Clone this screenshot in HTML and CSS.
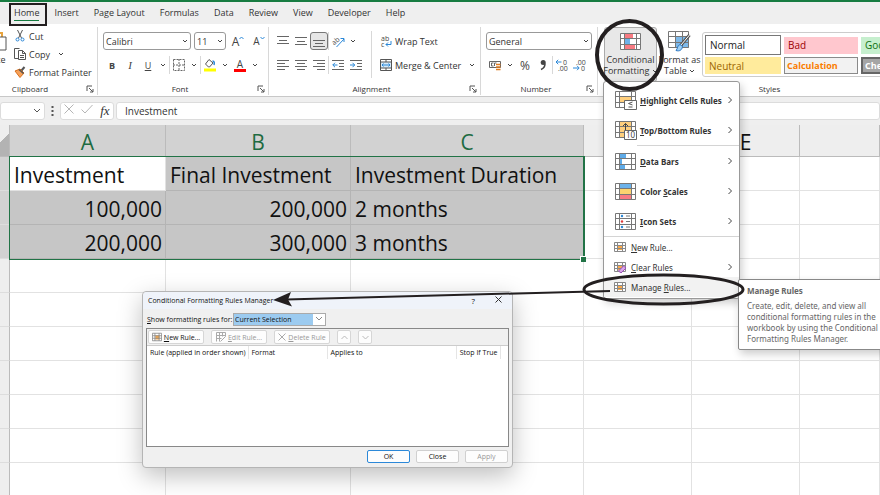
FILE: index.html
```html
<!DOCTYPE html>
<html lang="en">
<head>
  <meta charset="UTF-8">
  <meta name="viewport" content="width=device-width, initial-scale=1.0">
  <title>Manage Rules</title>
  <link rel="stylesheet" href="styles.css">
</head>
<body>
  <!-- Shared shapes -->
  <svg class="defs" width="0" height="0" aria-hidden="true">
    <symbol id="caret" viewBox="0 0 6 6"><path d="M1 2l2 2 2-2" fill="none" stroke="#444"/></symbol>
    <symbol id="arrow" viewBox="0 0 6 10"><path d="M1.500 2l3 3-3 3" fill="none" stroke="#444"/></symbol>
    <symbol id="launcher" viewBox="0 0 8 8"><path d="M1 6V1h5M3 3l4 4M7 4v3H4" fill="none" stroke="#555"/></symbol>
    <symbol id="gridlines" viewBox="0 0 21 17"><path d="M.5.5h20v16H.5zM.5 5.500h20M.5 11.500h20M4.500.5v16M16.500.5v16" fill="none" stroke="#777"/></symbol>
    <symbol id="rule" viewBox="0 0 12 12"><path d="M.5 1.500h11v9H.5z" fill="#fff"/><path d="M4 4h5v5H4z" fill="#f9a94b"/><path d="M.5 1.500h11v9H.5zM.5 4.500h11M.5 7.500h11M3.500 1.500v9M8.500 1.500v9" fill="none" stroke="#888"/></symbol>
  </svg>

  <nav class="tabs">
    <button class="tab active">Home</button>
    <button class="tab">Insert</button>
    <button class="tab">Page Layout</button>
    <button class="tab">Formulas</button>
    <button class="tab">Data</button>
    <button class="tab">Review</button>
    <button class="tab">View</button>
    <button class="tab">Developer</button>
    <button class="tab">Help</button>
  </nav>

  <div class="ribbon">
    <!-- Clipboard -->
    <section class="group clipboard">
      <div class="group-body">
        <button class="paste">
          <svg width="26" height="22" viewBox="0 0 26 22"><path d="M3 3h18v15H3z" fill="#fff" stroke="#e8a33d" stroke-width="2"/><path d="M13 7h12v13H13z" fill="#fff" stroke="#555"/></svg>
          Paste
        </button>
        <div class="stack">
          <button class="line-btn">
            <svg width="12" height="12" viewBox="0 0 12 12"><path d="M3.500 0l4 8M8.500 0l-4 8" stroke="#555" fill="none"/><circle cx="3.500" cy="9.500" r="1.500" fill="none" stroke="#2b88d8"/><circle cx="8.500" cy="9.500" r="1.500" fill="none" stroke="#2b88d8"/></svg>
            Cut
          </button>
          <button class="line-btn">
            <svg width="12" height="12" viewBox="0 0 12 12"><path d="M4.500 10.500H.5V.5h5" fill="none" stroke="#555"/><path d="M4.500 2.500h4l3 3v6h-7zM8.500 2.500v3h3M6 7.500h4M6 9.500h4" fill="#fff" stroke="#555"/></svg>
            Copy
            <svg class="gap-caret" width="6" height="6"><use href="#caret"/></svg>
          </button>
          <button class="line-btn">
            <svg width="12" height="12" viewBox="0 0 12 12"><path d="M7.500 4.500L10.500 1" stroke="#555" stroke-width="2"/><path d="M1 5l5-2 4 4-4 4.500z" fill="#f6a15a" stroke="#d86e1a"/><path d="M5 3.500l4.500 4" stroke="#555" stroke-width="1.500"/></svg>
            Format Painter
          </button>
        </div>
      </div>
      <div class="group-foot"><span>Clipboard</span><svg width="8" height="8"><use href="#launcher"/></svg></div>
    </section>

    <!-- Font -->
    <section class="group font">
      <div class="group-body rows">
        <div class="row fields">
          <select class="field font-name" aria-label="Font"><option>Calibri</option></select>
          <select class="field font-size" aria-label="Font size"><option>11</option></select>
          <button class="tool grow">A<svg width="5" height="4" viewBox="0 0 5 4"><path d="M.5 3l2-2 2 2" fill="none" stroke="#2b88d8"/></svg></button>
          <button class="tool shrink">A<svg width="5" height="4" viewBox="0 0 5 4"><path d="M.5 1l2 2 2-2" fill="none" stroke="#2b88d8"/></svg></button>
        </div>
        <div class="row">
          <button class="tool"><b>B</b></button>
          <button class="tool italic">I</button>
          <button class="tool"><u>U</u></button>
          <button class="drop" aria-label="Underline style"><svg width="6" height="6"><use href="#caret"/></svg></button>
          <span class="sep"></span>
          <button class="tool" aria-label="Borders"><svg width="12" height="12" viewBox="0 0 12 12"><path d="M.5.5h11v11H.5zM6 0v12M0 6h12" fill="none" stroke="#666" stroke-dasharray="2 1"/></svg></button>
          <button class="drop" aria-label="Border style"><svg width="6" height="6"><use href="#caret"/></svg></button>
          <span class="sep"></span>
          <button class="tool" aria-label="Fill color"><svg width="12" height="14" viewBox="0 0 12 14"><path d="M5 1.500L1.500 6l3 3h1l3.500-4z" fill="#fff" stroke="#555"/><path d="M8.500 3c2 0 2 2 1.500 4" fill="none" stroke="#2b88d8" stroke-width="1.500"/><path d="M0 10.500h12v3H0z" fill="#ff0"/></svg></button>
          <button class="drop" aria-label="Fill colors"><svg width="6" height="6"><use href="#caret"/></svg></button>
          <button class="tool font-color">A</button>
          <button class="drop" aria-label="Font colors"><svg width="6" height="6"><use href="#caret"/></svg></button>
        </div>
      </div>
      <div class="group-foot"><span>Font</span><svg width="8" height="8"><use href="#launcher"/></svg></div>
    </section>

    <!-- Alignment -->
    <section class="group align">
      <div class="group-body">
        <div class="rows">
          <div class="row">
            <button class="tool" aria-label="Top align"><svg width="12" height="12" viewBox="0 0 12 12"><path d="M0 1.500h12M2 5.500h8M0 8.500h12" stroke="#666"/></svg></button>
            <button class="tool" aria-label="Middle align"><svg width="12" height="12" viewBox="0 0 12 12"><path d="M0 2.500h12M2 6.500h8M0 9.500h12" stroke="#666"/></svg></button>
            <button class="tool pressed" aria-label="Bottom align"><svg width="12" height="12" viewBox="0 0 12 12"><path d="M0 5.500h12M2 8.500h8M0 11.500h12" stroke="#666"/></svg></button>
            <span class="sep"></span>
            <button class="tool" aria-label="Orientation"><svg width="14" height="14" viewBox="0 0 14 14"><text x="1" y="10" font-size="7" fill="#444" transform="rotate(-40 4 8)">ab</text><path d="M5.500 13L13 5M9.500 4.500H13V8" fill="none" stroke="#2b88d8"/></svg></button>
            <button class="drop" aria-label="Orientations"><svg width="6" height="6"><use href="#caret"/></svg></button>
          </div>
          <div class="row">
            <button class="tool" aria-label="Align left"><svg width="12" height="12" viewBox="0 0 12 12"><path d="M0 1.500h12M0 4.500h8M0 7.500h12M0 10.500h8" stroke="#666"/></svg></button>
            <button class="tool" aria-label="Center"><svg width="12" height="12" viewBox="0 0 12 12"><path d="M0 1.500h12M2 4.500h8M0 7.500h12M2 10.500h8" stroke="#666"/></svg></button>
            <button class="tool" aria-label="Align right"><svg width="12" height="12" viewBox="0 0 12 12"><path d="M0 1.500h12M4 4.500h8M0 7.500h12M4 10.500h8" stroke="#666"/></svg></button>
            <span class="sep"></span>
            <button class="tool" aria-label="Decrease indent"><svg width="12" height="12" viewBox="0 0 12 12"><path d="M0 1.500h12M7 4.500h5M7 7.500h5M0 10.500h12" stroke="#666"/><path d="M5.500 6H.8M3 3.800L.8 6 3 8.200" fill="none" stroke="#2b88d8"/></svg></button>
            <button class="tool" aria-label="Increase indent"><svg width="12" height="12" viewBox="0 0 12 12"><path d="M0 1.500h12M7 4.500h5M7 7.500h5M0 10.500h12" stroke="#666"/><path d="M0 6h4.700M2.500 3.800L4.700 6 2.500 8.200" fill="none" stroke="#2b88d8"/></svg></button>
          </div>
        </div>
        <div class="rows split">
          <button class="line-btn">
            <svg width="12" height="14" viewBox="0 0 12 14"><text x="1" y="7" font-size="7" fill="#444">ab</text><text x="1" y="13" font-size="7" fill="#444">c</text><path d="M11 7v3.500H6M8 8.500l-2 2 2 2" fill="none" stroke="#2b88d8"/></svg>
            Wrap Text
          </button>
          <button class="line-btn">
            <svg width="12" height="12" viewBox="0 0 12 12"><path d="M.5 3h11v6H.5z" fill="#d6eafa"/><path d="M.5.5h11v11H.5zM.5 3h11M.5 9h11M6 .5V3M6 9v2.500" fill="none" stroke="#555"/><path d="M2 6h8M3.500 4.500L2 6l1.500 1.500M8.500 4.500L10 6 8.500 7.500" fill="none" stroke="#2b88d8"/></svg>
            Merge &amp; Center
            <svg class="gap-caret" width="6" height="6"><use href="#caret"/></svg>
          </button>
        </div>
      </div>
      <div class="group-foot"><span>Alignment</span><svg width="8" height="8"><use href="#launcher"/></svg></div>
    </section>

    <!-- Number -->
    <section class="group number">
      <div class="group-body rows">
        <div class="row fields">
          <select class="field format" aria-label="Number format"><option>General</option></select>
        </div>
        <div class="row">
          <button class="tool" aria-label="Accounting format"><svg width="13" height="12" viewBox="0 0 13 12"><path d="M.5 2.500h11v6H.5z" fill="#fff" stroke="#666"/><path d="M4.500 4h-2v3h2M7.500 4h-2v3" fill="none" stroke="#666"/><path d="M7 5.500h4.500M7 8h4.500M7 10.500h4.500" stroke="#e07b1f" stroke-width="1.500"/></svg></button>
          <button class="drop" aria-label="Currencies"><svg width="6" height="6"><use href="#caret"/></svg></button>
          <button class="tool percent">%</button>
          <button class="tool" aria-label="Comma style"><svg width="8" height="12" viewBox="0 0 8 12"><path d="M2 10.500c2.500-1 4-3 4-6" fill="none" stroke="#444" stroke-width="1.500"/><circle cx="4.200" cy="3.500" r="2.500" fill="#444"/></svg></button>
          <span class="sep"></span>
          <button class="tool" aria-label="Increase decimal"><svg width="14" height="14" viewBox="0 0 14 14"><path d="M1 4h5.500M3.200 1.800L1 4l2.200 2.200" fill="none" stroke="#2b88d8"/><text x="8" y="7" font-size="7" fill="#444">0</text><text x="3" y="13" font-size="7" fill="#444">.00</text></svg></button>
          <button class="tool" aria-label="Decrease decimal"><svg width="14" height="14" viewBox="0 0 14 14"><text x="3" y="7" font-size="7" fill="#444">.00</text><path d="M0 10h6M4 7.800L6.200 10 4 12.200" fill="none" stroke="#2b88d8"/><text x="8" y="13" font-size="7" fill="#444">0</text></svg></button>
        </div>
      </div>
      <div class="group-foot"><span>Number</span><svg width="8" height="8"><use href="#launcher"/></svg></div>
    </section>

    <!-- Styles -->
    <section class="group styles">
      <div class="group-body">
        <button class="big-btn open">
          <svg width="21" height="17" viewBox="0 0 21 17"><path d="M.5.5h20v16H.5z" fill="#fff"/><path d="M4 0h9v6H4zM4 11h11v6H4z" fill="#f77b83"/><path d="M4 6h6v5H4z" fill="#6cb2ea"/><use href="#gridlines" width="21" height="17"/></svg>
          <span>Conditional</span>
          <span>Formatting <svg width="6" height="6"><use href="#caret"/></svg></span>
        </button>
        <button class="big-btn narrow">
          <svg width="23" height="21" viewBox="0 0 23 21"><path d="M.5.5h20v16H.5z" fill="#fff"/><path d="M7 6h14v11H7z" fill="#7db9ea"/><path d="M.5.5h20v16H.5zM.5 5.500h20M.5 11.500h20M7.500.5v16M14.500.5v16" fill="none" stroke="#777"/><path d="M21.500 4L13 14" stroke="#555" stroke-width="3"/><path d="M21.500 4L13 14" stroke="#fff"/><path d="M8 19.500c3 1 6 0 6.500-4l-2.500-2c-3 1-2 4-4 6z" fill="#9fd0f5" stroke="#2b78c4"/></svg>
          <span>Format as</span>
          <span>Table <svg width="6" height="6"><use href="#caret"/></svg></span>
        </button>
        <div class="gallery">
          <button class="style normal">Normal</button>
          <button class="style bad">Bad</button>
          <button class="style good">Good</button>
          <button class="style neutral">Neutral</button>
          <button class="style calc">Calculation</button>
          <button class="style check">Check Cell</button>
        </div>
      </div>
      <div class="group-foot"><span>Styles</span></div>
    </section>
  </div>

  <div class="formula-bar">
    <div class="name-box"><svg width="8" height="6" viewBox="0 0 8 6"><path d="M1 1l3 3 3-3" fill="none" stroke="#555"/></svg></div>
    <svg width="3" height="10" viewBox="0 0 3 10"><path d="M.5 1h2M.5 5h2M.5 9h2" stroke="#555" stroke-width="2"/></svg>
    <div class="entry">
      <button aria-label="Cancel"><svg width="10" height="10" viewBox="0 0 10 10"><path d="M.5.5l9 9M9.500.5l-9 9" stroke="#b5b5b5"/></svg></button>
      <button aria-label="Enter"><svg width="12" height="10" viewBox="0 0 12 10"><path d="M.5 5.500l3.500 3.500 7.500-8" fill="none" stroke="#b5b5b5"/></svg></button>
      <button class="fx">fx</button>
    </div>
    <input class="formula" aria-label="Formula" value="Investment">
  </div>

  <main class="sheet">
    <table>
      <colgroup>
        <col class="col-head"><col class="col-a"><col class="col-b"><col class="col-c"><col class="col-d"><col class="col-d"><col>
      </colgroup>
      <thead>
        <tr>
          <th class="corner"></th>
          <th class="on">A</th><th class="on">B</th><th class="on">C</th><th></th><th>E</th><th></th>
        </tr>
      </thead>
      <tbody>
        <tr><th class="on"></th><td class="current">Investment</td><td class="in">Final Investment</td><td class="in">Investment Duration</td><td></td><td></td><td></td></tr>
        <tr><th class="on"></th><td class="in num">100,000</td><td class="in num">200,000</td><td class="in">2 months</td><td></td><td></td><td></td></tr>
        <tr><th class="on"></th><td class="in num">200,000</td><td class="in num">300,000</td><td class="in">3 months</td><td></td><td></td><td></td></tr>
        <tr><th></th><td></td><td></td><td></td><td></td><td></td><td></td></tr>
        <tr><th></th><td></td><td></td><td></td><td></td><td></td><td></td></tr>
        <tr><th></th><td></td><td></td><td></td><td></td><td></td><td></td></tr>
        <tr><th></th><td></td><td></td><td></td><td></td><td></td><td></td></tr>
        <tr><th></th><td></td><td></td><td></td><td></td><td></td><td></td></tr>
        <tr><th></th><td></td><td></td><td></td><td></td><td></td><td></td></tr>
        <tr><th></th><td></td><td></td><td></td><td></td><td></td><td></td></tr>
      </tbody>
    </table>
    <div class="selection"></div>
  </main>

  <!-- Rules manager dialog -->
  <div class="dialog" role="dialog" aria-labelledby="dialogTitle">
    <header class="dialog-title">
      <span id="dialogTitle">Conditional Formatting Rules Manager</span>
      <button class="help">?</button>
      <button aria-label="Close window"><svg width="7" height="7" viewBox="0 0 7 7"><path d="M.5.5l6 6M6.500.5l-6 6" stroke="#333"/></svg></button>
    </header>
    <div class="scope">
      <label for="scope"><u>S</u>how formatting rules for:</label>
      <select id="scope"><option>Current Selection</option></select>
    </div>
    <div class="rules">
      <div class="rules-bar">
        <button class="rule-btn"><svg width="10" height="10"><use href="#rule"/></svg><span><u>N</u>ew Rule...</span></button>
        <button class="rule-btn" disabled><svg width="10" height="10" viewBox="0 0 10 10"><path d="M.5 9.500v-9h9v4M.5 3.500h9M.5 6.500h5M3.500.5v9M6.500.5v4M4.500 9.500l5-5" fill="none" stroke="#aaa"/></svg><span><u>E</u>dit Rule...</span></button>
        <button class="rule-btn" disabled><svg width="8" height="8" viewBox="0 0 8 8"><path d="M.5.5l7 7M7.500.5l-7 7" stroke="#aaa"/></svg><span><u>D</u>elete Rule</span></button>
        <button class="rule-btn move" disabled aria-label="Move up"><svg width="7" height="5" viewBox="0 0 7 5"><path d="M.5 4l3-3 3 3" fill="none" stroke="#bbb"/></svg></button>
        <button class="rule-btn move" disabled aria-label="Move down"><svg width="7" height="5" viewBox="0 0 7 5"><path d="M.5 1l3 3 3-3" fill="none" stroke="#bbb"/></svg></button>
      </div>
      <table class="rule-list">
        <thead>
          <tr><th class="c-rule">Rule (applied in order shown)</th><th class="c-format">Format</th><th>Applies to</th><th class="c-stop">Stop If True</th></tr>
        </thead>
      </table>
    </div>
    <footer class="dialog-foot">
      <button class="default">OK</button>
      <button>Close</button>
      <button disabled>Apply</button>
    </footer>
  </div>

  <!-- Conditional Formatting menu -->
  <div class="menu">
    <button class="item">
      <svg width="22" height="19" viewBox="0 0 22 19"><path d="M5 5h11v6H5z" fill="#ffcf7d"/><use href="#gridlines" width="21" height="17"/><path d="M9.500 9.500h12v9h-12z" fill="#fff" stroke="#666"/><path d="M17.500 11l-4 1.500 4 1.500M13.500 16h4" fill="none" stroke="#555"/></svg>
      <span><u>H</u>ighlight Cells Rules</span><svg width="6" height="10"><use href="#arrow"/></svg>
    </button>
    <button class="item">
      <svg width="22" height="19" viewBox="0 0 22 19"><path d="M5 0h11v16H5z" fill="#ffcf7d"/><use href="#gridlines" width="21" height="17"/><path d="M10.500 9V2.500M8 5l2.500-2.500L13 5" fill="none" stroke="#444"/><path d="M9.500 9.500h12v9h-12z" fill="#fff" stroke="#666"/><text x="11" y="17" font-size="8" font-weight="400" fill="#444">10</text></svg>
      <span><u>T</u>op/Bottom Rules</span><svg width="6" height="10"><use href="#arrow"/></svg>
    </button>
    <hr class="short">
    <button class="item">
      <svg width="22" height="17" viewBox="0 0 22 17"><path d="M4 0h7v6H4zM4 6h3v5H4zM4 11h6v5H4z" fill="#5fabe8"/><use href="#gridlines" width="21" height="17"/></svg>
      <span><u>D</u>ata Bars</span><svg width="6" height="10"><use href="#arrow"/></svg>
    </button>
    <button class="item">
      <svg width="22" height="17" viewBox="0 0 22 17"><path d="M4 0h12v6H4z" fill="#6cb2ea"/><path d="M4 6h12v5H4z" fill="#fbd36f"/><path d="M4 11h12v5H4z" fill="#f77b83"/><use href="#gridlines" width="21" height="17"/></svg>
      <span>Color <u>S</u>cales</span><svg width="6" height="10"><use href="#arrow"/></svg>
    </button>
    <button class="item">
      <svg width="22" height="17" viewBox="0 0 22 17"><path d="M.5.5h20v16H.5zM.5 5.500h20M.5 11.500h20M4.500.5v16M16.500.5v16" fill="none" stroke="#777"/><circle cx="7" cy="3" r="1.200" fill="#2b88d8"/><circle cx="7" cy="8.500" r="1.200" fill="#e23b3b"/><circle cx="7" cy="14" r="1.200" fill="#2b88d8"/><path d="M11 3h4M11 8.500h4M11 14h4" stroke="#777"/></svg>
      <span><u>I</u>con Sets</span><svg width="6" height="10"><use href="#arrow"/></svg>
    </button>
    <hr>
    <button class="item small">
      <svg width="12" height="12"><use href="#rule"/></svg><span><u>N</u>ew Rule...</span>
    </button>
    <button class="item small">
      <svg width="12" height="12" viewBox="0 0 12 12"><use href="#rule" width="12" height="12"/><path d="M4.500 10l5-5 2.500 2-5 5z" fill="#d9a6ea" stroke="#9a4fb5"/></svg><span><u>C</u>lear Rules</span><svg width="6" height="10"><use href="#arrow"/></svg>
    </button>
    <button class="item small hover">
      <svg width="12" height="12"><use href="#rule"/></svg><span>Manage <u>R</u>ules...</span>
    </button>
  </div>

  <div class="tip" role="tooltip">
    <strong>Manage Rules</strong>
    <p>Create, edit, delete, and view all conditional formatting rules in the workbook by using the Conditional Formatting Rules Manager.</p>
  </div>

  <!-- Callouts -->
  <svg class="callouts" width="880" height="495" viewBox="0 0 880 495" fill="none" stroke="#231f20" aria-hidden="true">
    <rect x="10" y="4" width="36" height="21" stroke-width="2"/>
    <ellipse cx="629.500" cy="55" rx="32.500" ry="34" stroke-width="4"/>
    <ellipse cx="663.500" cy="289.500" rx="79.500" ry="14.500" stroke-width="3"/>
    <path d="M610 291L286 299.500" stroke-width="2"/>
    <path d="M273 300l18-8-3 7.500 4 7z" fill="#231f20" stroke="none"/>
  </svg>
</body>
</html>
```

FILE: styles.css
```css
* {
  box-sizing: border-box;
}
body {
  margin: 0;
  height: 100vh;
  overflow: hidden;
  position: relative;
  font-family: "Open Sans", "Noto Sans", sans-serif;
  font-size: 9px;
  color: #333;
  background: #fff;
}
button, select, input {
  font: inherit;
  color: inherit;
  margin: 0;
}
button {
  padding: 0;
  border: none;
  background: none;
  white-space: nowrap;
}
svg {
  flex: none;
}
.defs {
  position: absolute;
}

/* Tabs */
.tabs {
  display: flex;
  gap: 15px;
  height: 24px;
  padding: 0 14px;
  border-top: 2px solid #177c41;
  background: #efefef;
}
.tab {
  height: 19px;
  padding-top: 2px;
  border-bottom: 1px solid transparent;
}
.tab.active {
  border-color: #177c41;
}

/* Ribbon */
.ribbon {
  display: flex;
  height: 73px;
  overflow: hidden;
  background: #fff;
  border-bottom: 1px solid #c8c8c8;
}
.group {
  flex: none;
  display: flex;
  flex-direction: column;
  margin-top: 3px;
  margin-bottom: 1px;
  border-right: 1px solid #d8d8d8;
}
.group-body {
  flex: 1;
  display: flex;
}
.group-foot {
  display: flex;
  align-items: center;
  height: 13px;
  padding-right: 3px;
  font-size: 8px;
}
.group-foot span {
  flex: 1;
  text-align: center;
}
.rows {
  display: flex;
  flex-direction: column;
  gap: 6px;
  padding-top: 5px;
}
.row {
  display: flex;
  align-items: center;
  height: 18px;
}
.fields {
  gap: 3px;
}
.clipboard {
  width: 124px;
  margin-left: -26px;
}
.paste {
  width: 40px;
  display: flex;
  flex-direction: column;
  align-items: center;
  gap: 1px;
  padding-top: 3px;
}
.stack {
  display: flex;
  flex-direction: column;
}
.line-btn {
  display: flex;
  align-items: center;
  gap: 3px;
  height: 18px;
}
.gap-caret {
  margin-left: 5px;
}
.font {
  width: 171px;
  padding-left: 5px;
}
.align {
  width: 212px;
  padding-left: 5px;
}
.number {
  width: 117px;
  padding-left: 5px;
}
.field {
  height: 18px;
  padding: 0 2px;
  border: 1px solid #999;
  border-radius: 3px;
  appearance: none;
  background: #fff url("data:image/svg+xml,%3Csvg xmlns='http://www.w3.org/2000/svg' width='6' height='6'%3E%3Cpath d='M1 2l2 2 2-2' fill='none' stroke='%23444'/%3E%3C/svg%3E") no-repeat right 2px center;
}
.font-name {
  width: 88px;
}
.font-size {
  width: 32px;
}
.format {
  width: 106px;
}
.tool {
  width: 18px;
  height: 18px;
  display: flex;
  align-items: center;
  justify-content: center;
  color: #444;
}
.tool.pressed {
  border: 1px solid #777;
  border-radius: 3px;
  background: #e6e6e6;
}
.italic {
  font: italic 11px "Liberation Serif", serif;
}
.grow {
  font-size: 12px;
}
.shrink {
  font-size: 10px;
}
.grow svg, .shrink svg {
  align-self: flex-start;
  margin-top: 4px;
}
.percent {
  font-size: 12px;
}
.font-color {
  height: 14px;
  width: 12px;
  margin: 0 3px;
  border-bottom: 3px solid #f00;
  font-size: 10px;
}
.drop {
  width: 12px;
  height: 18px;
  display: flex;
  align-items: center;
  justify-content: center;
}
.sep {
  width: 1px;
  height: 18px;
  background: #d8d8d8;
}
.split {
  margin: 4px 0 4px 6px;
  padding: 1px 0 0 8px;
  border-left: 1px solid #d8d8d8;
}
.styles {
  border-right: none;
  padding-left: 6px;
}
.big-btn {
  width: 53px;
  display: flex;
  flex-direction: column;
  align-items: center;
  padding-top: 4px;
  line-height: 11px;
}
.big-btn > svg {
  height: 21px;
  margin-bottom: 2px;
}
.big-btn.open {
  padding-top: 3px;
  border: 1px solid #aaa;
  border-radius: 3px;
  background: #e8e8e8;
}
.big-btn.narrow {
  width: 45px;
}
.gallery {
  display: grid;
  grid-template-columns: 76px 74px 74px;
  gap: 2px 3px;
  align-self: flex-start;
  margin-top: 5px;
  padding: 2px;
  border: 1px solid #ccc;
  border-radius: 3px;
  background: #fff;
}
.style {
  height: 17px;
  align-self: center;
  padding-left: 4px;
  text-align: left;
  font-size: 10px;
}
.normal {
  height: 20px;
  border: 1px solid #777;
  color: #222;
}
.bad {
  background: #ffc7ce;
  color: #9c0006;
}
.good {
  background: #c6efce;
  color: #107010;
}
.neutral {
  background: #ffeb9c;
  color: #9c6500;
}
.calc {
  padding-left: 2px;
  border: 1px solid #8a8a8a;
  background: #f2f2f2;
  color: #fa7d00;
  font-size: 9px;
  font-weight: bold;
}
.check {
  padding-left: 2px;
  border: 2px solid #666;
  background: #a5a5a5;
  color: #fff;
  font-size: 9px;
  font-weight: bold;
}

/* Formula bar */
.formula-bar {
  display: flex;
  align-items: center;
  gap: 2px;
  height: 28px;
  padding-bottom: 1px;
  background: #efefef;
}
.formula-bar > svg {
  margin: 0 4px;
}
.name-box, .entry, .formula {
  height: 18px;
  border: 1px solid #dcdcdc;
  border-radius: 3px;
  background: #fff;
}
.name-box {
  width: 45px;
  display: flex;
  align-items: center;
  justify-content: flex-end;
  padding-right: 3px;
}
.entry {
  width: 54px;
  display: flex;
  align-items: center;
  justify-content: space-around;
}
.fx {
  font: italic 13px "Liberation Serif", serif;
}
.formula {
  flex: 1;
  min-width: 0;
  padding: 0 8px;
  font-size: 10px;
}

/* Sheet */
.sheet {
  position: relative;
  font-size: 21px;
  color: #111;
}
.sheet table {
  width: 100%;
  table-layout: fixed;
  border-collapse: separate;
  border-spacing: 0;
}
.col-head {
  width: 10px;
}
.col-a {
  width: 156px;
}
.col-b {
  width: 185px;
}
.col-c {
  width: 233px;
}
.col-d {
  width: 108px;
}
.sheet th {
  padding: 2px 0 0;
  font-weight: normal;
  background: #eee;
  border-right: 1px solid #bbb;
  border-bottom: 1px solid #ddd;
}
.sheet thead th {
  height: 32px;
  border-bottom-color: #bbb;
}
.sheet th.on {
  background: #d2d2d2;
  color: #1e6b41;
}
.sheet th.corner {
  background: linear-gradient(135deg, #eee 45%, #b3b3b3 45%);
}
.sheet td {
  height: 34px;
  padding: 2px 3px 0 4px;
  white-space: nowrap;
  border-right: 1px solid #e2e2e2;
  border-bottom: 1px solid #e2e2e2;
}
.sheet td.in {
  background: #c6c6c6;
  border-color: #b4b4b4;
}
.sheet .num {
  text-align: right;
}
.selection {
  position: absolute;
  left: 9px;
  top: 31px;
  width: 576px;
  height: 104px;
  border: 1px solid #217346;
  border-right-width: 2px;
}
.selection::after {
  content: "";
  position: absolute;
  right: -3px;
  bottom: -3px;
  width: 5px;
  height: 5px;
  border: 1px solid #fff;
  border-width: 1px 0 0 1px;
  background: #217346;
}

/* Dialog */
.dialog {
  position: absolute;
  left: 142px;
  top: 291px;
  width: 371px;
  height: 177px;
  display: flex;
  flex-direction: column;
  border: 1px solid #b5b5b5;
  border-radius: 4px;
  background: #f0f0f0;
  box-shadow: 0 8px 24px rgba(0, 0, 0, 0.25);
  font-size: 7px;
  color: #111;
}
.dialog-title {
  display: flex;
  align-items: center;
  gap: 20px;
  height: 17px;
  padding: 0 10px 0 5px;
  border-radius: 4px 4px 0 0;
  background: #eff3fa;
}
.dialog-title span {
  flex: 1;
}
.help {
  font-size: 8px;
}
.scope {
  display: flex;
  align-items: center;
  gap: 6px;
  height: 19px;
  padding: 2px 4px 0;
}
.scope label {
  width: 80px;
  white-space: nowrap;
}
.scope select {
  width: 93px;
  height: 13px;
  padding: 0 1px;
  border: 1px solid #aaa;
  appearance: none;
  background: url("data:image/svg+xml,%3Csvg xmlns='http://www.w3.org/2000/svg' width='12' height='13'%3E%3Cpath d='M0 0h12v13H0z' fill='%23fff'/%3E%3Cpath d='M3 4l3 3 3-3' fill='none' stroke='%23888'/%3E%3C/svg%3E") no-repeat right center #9ccbf0;
}
.rules {
  flex: 1;
  margin: 0 3px;
  border: 1px solid #888;
  background: #fff;
}
.rules-bar {
  display: flex;
  gap: 7px;
  padding: 1px;
  background: #f0f0f0;
  border-bottom: 1px solid #ccc;
}
.rule-btn {
  width: 56px;
  height: 14px;
  display: flex;
  align-items: center;
  justify-content: center;
  gap: 2px;
  border: 1px solid #d6d6d6;
  border-radius: 2px;
  background: #fdfdfd;
}
.rule-btn.move {
  width: 14px;
}
button:disabled {
  color: #999;
}
.rule-list {
  width: 98%;
  table-layout: fixed;
  border-collapse: collapse;
}
.rule-list th {
  height: 13px;
  padding: 0 3px;
  border-right: 1px solid #e5e5e5;
  font-weight: normal;
  text-align: left;
  white-space: nowrap;
}
.c-rule {
  width: 101px;
}
.c-format {
  width: 79px;
}
.c-stop {
  width: 44px;
}
.dialog-foot {
  display: flex;
  justify-content: flex-end;
  gap: 6px;
  padding: 3px 4px 4px;
}
.dialog-foot button {
  width: 43px;
  height: 13px;
  border: 1px solid #d0d0d0;
  border-radius: 2px;
  background: #fdfdfd;
}
.dialog-foot .default {
  border-color: #2b88d8;
}

/* Menu */
.menu {
  position: absolute;
  left: 603px;
  top: 81px;
  width: 137px;
  display: flex;
  flex-direction: column;
  padding: 3px 0 1px;
  border: 1px solid #999;
  border-radius: 3px;
  background: #fff;
  box-shadow: 2px 4px 8px rgba(0, 0, 0, 0.2);
  font-family: "Noto Sans", "Open Sans", sans-serif;
}
.item {
  display: flex;
  align-items: center;
  gap: 3px;
  height: 30px;
  padding: 0 6px 0 11px;
  font-size: 8px;
  font-weight: bold;
  text-align: left;
}
.item span {
  flex: 1;
}
.item.small {
  height: 20px;
  padding-left: 10px;
  gap: 5px;
  font-weight: normal;
}
.item.hover {
  background: #f2f2f2;
}
.menu hr {
  width: 100%;
  margin: 0;
  border: none;
  border-top: 1px solid #d4d4d4;
}
.menu .short {
  width: 102px;
  margin-left: auto;
}

/* Tooltip */
.tip {
  position: absolute;
  left: 738px;
  top: 279px;
  width: 150px;
  padding: 5px 5px 5px 8px;
  border: 1px solid #888;
  border-radius: 2px;
  background: #fff;
  box-shadow: 2px 4px 8px rgba(0, 0, 0, 0.2);
  font-family: "Noto Sans", "Open Sans", sans-serif;
  font-size: 8px;
  line-height: 11px;
  color: #666;
}
.tip p {
  margin: 4px 0 0;
}

.callouts {
  position: absolute;
  left: 0;
  top: 0;
  pointer-events: none;
}
```
